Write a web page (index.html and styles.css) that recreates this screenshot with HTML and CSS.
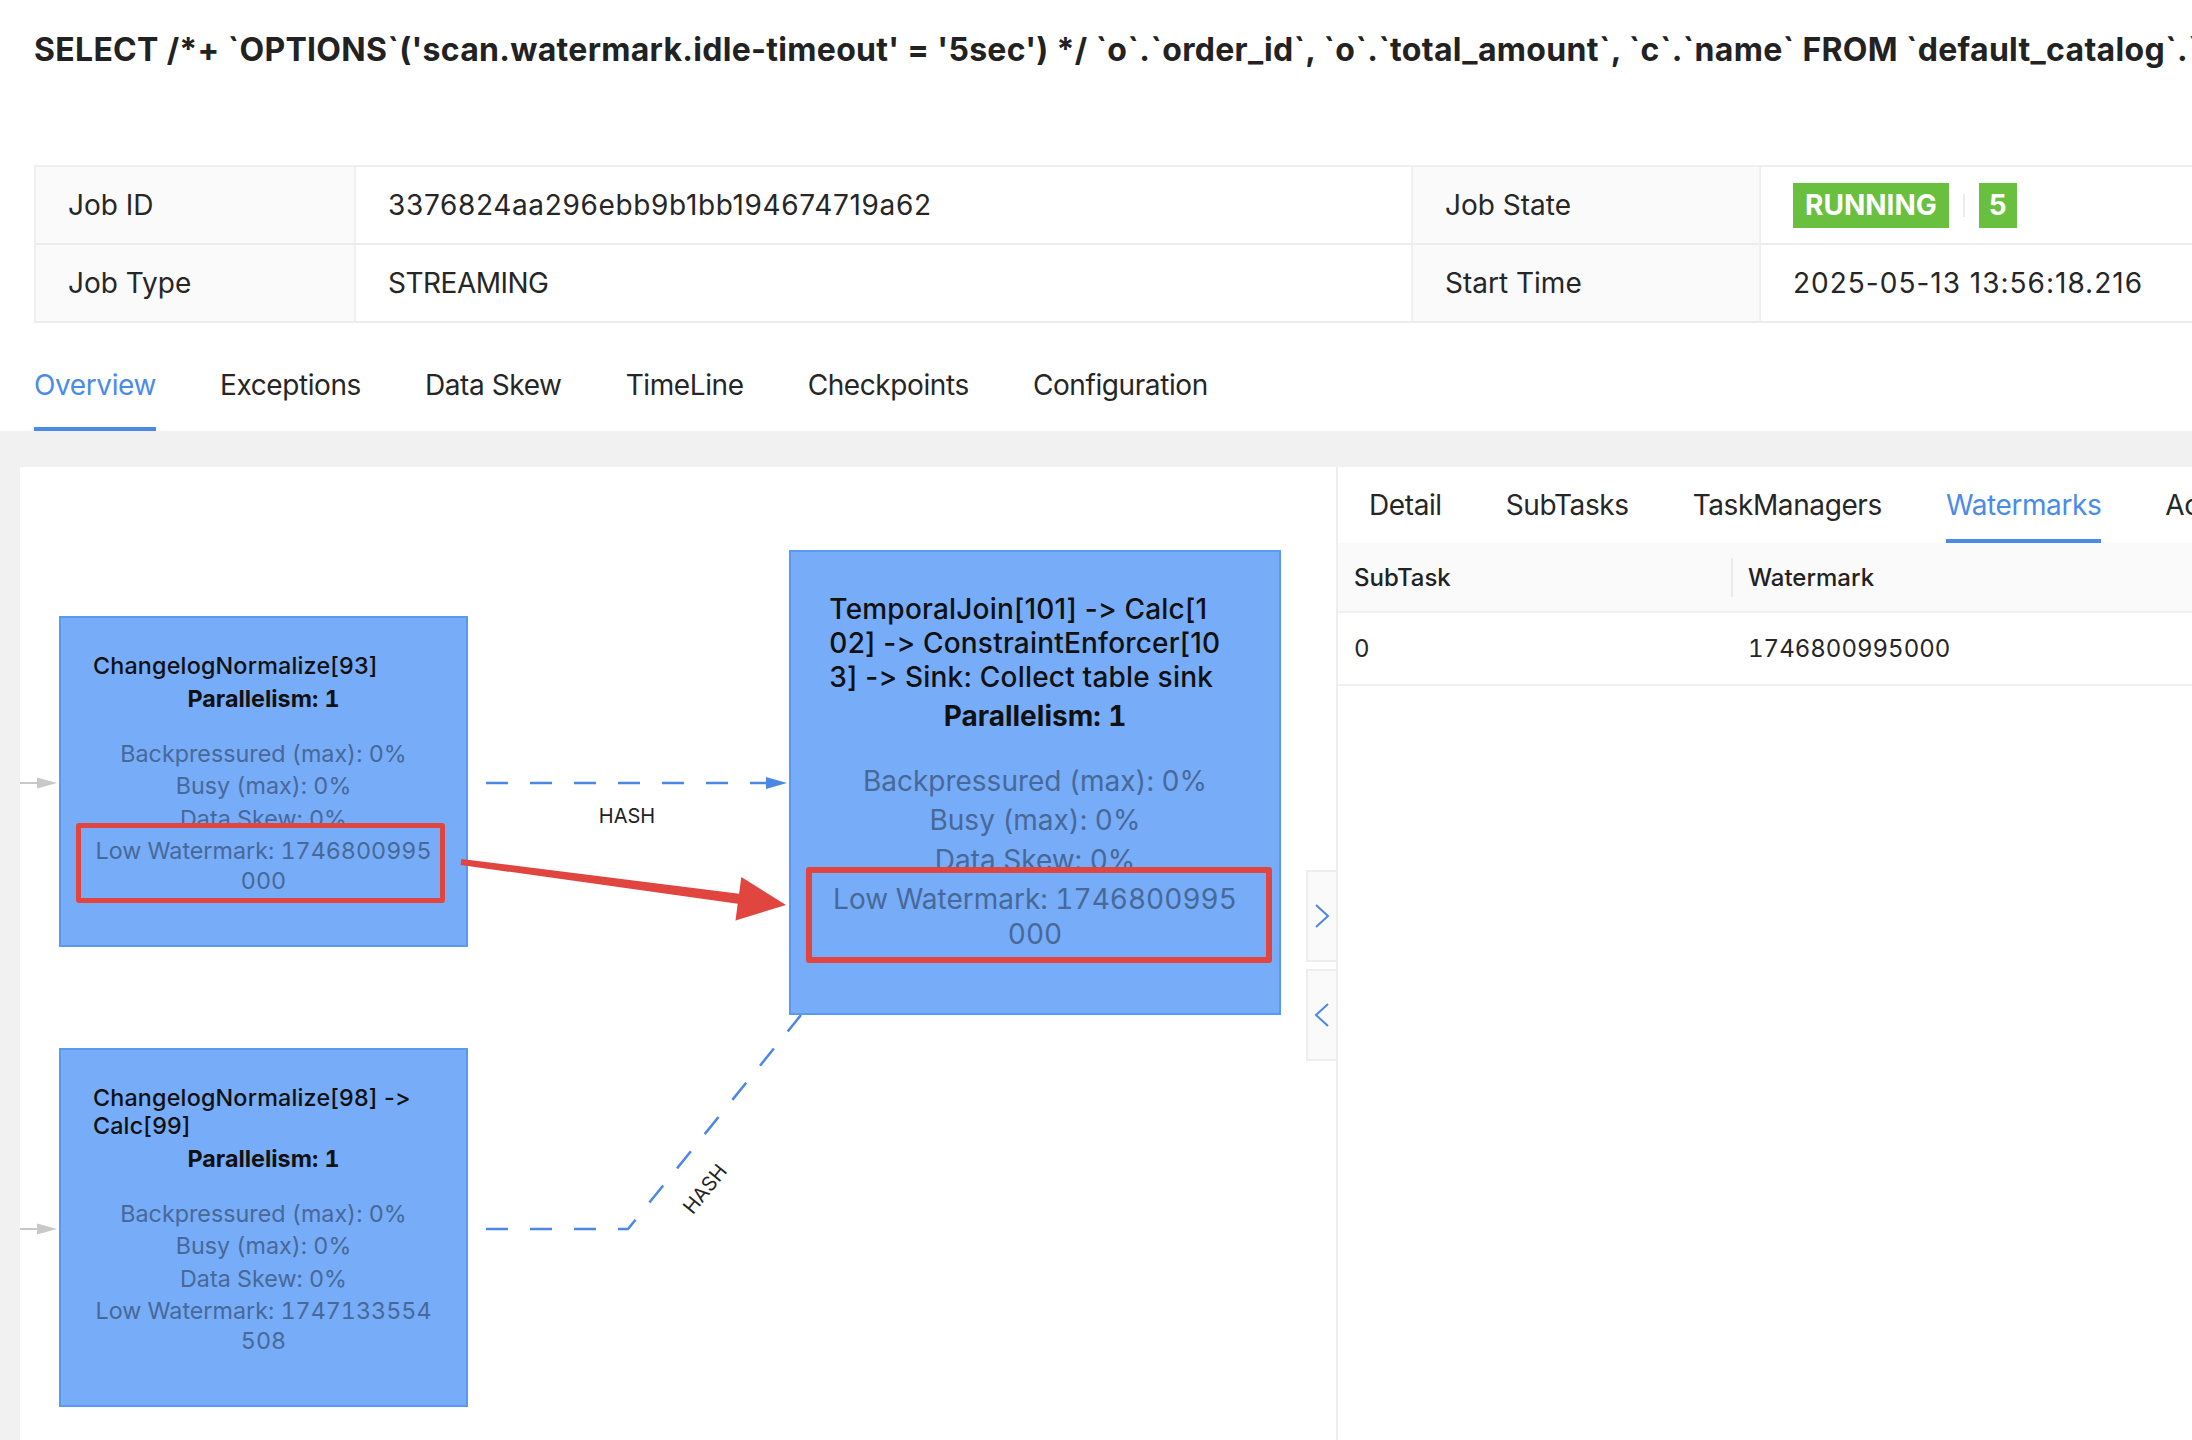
FILE: index.html
```html
<!DOCTYPE html>
<html lang="en">
<head>
<meta charset="utf-8">
<title>Flink Job</title>
<link rel="stylesheet" href="styles.css">
</head>
<body>
<h1 class="sql">SELECT /*+ `OPTIONS`('scan.watermark.idle-timeout' = '5sec') */ `o`.`order_id`, `o`.`total_amount`, `c`.`name` FROM `default_catalog`.`default_database`.`orders` AS `o`</h1>

<div class="desc">
  <div class="desc-label">Job ID</div>
  <div class="desc-value val-id">3376824aa296ebb9b1bb194674719a62</div>
  <div class="desc-label">Job State</div>
  <div class="desc-value"><span class="tag">RUNNING</span><span class="tag-divider"></span><span class="tag tag-num">5</span></div>
  <div class="desc-label">Job Type</div>
  <div class="desc-value val-type">STREAMING</div>
  <div class="desc-label">Start Time</div>
  <div class="desc-value val-date">2025-05-13 13:56:18.216</div>
</div>

<nav class="tabs">
  <div class="tab active">Overview</div>
  <div class="tab">Exceptions</div>
  <div class="tab">Data Skew</div>
  <div class="tab">TimeLine</div>
  <div class="tab">Checkpoints</div>
  <div class="tab">Configuration</div>
</nav>

<main class="main">
  <section class="graph">
    <svg class="edges" width="1316" height="973" viewBox="0 0 1316 973">
      <line x1="0" y1="316" x2="20" y2="316" class="in-line"/>
      <polygon points="17,310.5 37,316 17,321.5" class="in-head"/>
      <line x1="0" y1="762" x2="20" y2="762" class="in-line"/>
      <polygon points="17,756.5 37,762 17,767.5" class="in-head"/>

      <line x1="466" y1="316" x2="748" y2="316" class="dash"/>
      <polygon points="746,310 767,316 746,322" class="dash-head"/>
      <text x="607" y="356" class="edge-label" text-anchor="middle">HASH</text>

      <polyline points="466,762 608,762 781,548" class="dash"/>
      <text transform="translate(685 722) rotate(-51)" y="7" class="edge-label" text-anchor="middle">HASH</text>
    </svg>

    <div class="node node-a">
      <div class="node-title">ChangelogNormalize[93]</div>
      <div class="node-par">Parallelism: 1</div>
      <div class="node-metrics">
        <div class="metric">Backpressured (max): 0%</div>
        <div class="metric">Busy (max): 0%</div>
        <div class="metric">Data Skew: 0%</div>
        <div class="metric">Low Watermark: 1746800995<br>000</div>
      </div>
    </div>

    <div class="node node-b">
      <div class="node-title">ChangelogNormalize[98] -&gt;<br>Calc[99]</div>
      <div class="node-par">Parallelism: 1</div>
      <div class="node-metrics">
        <div class="metric">Backpressured (max): 0%</div>
        <div class="metric">Busy (max): 0%</div>
        <div class="metric">Data Skew: 0%</div>
        <div class="metric">Low Watermark: 1747133554<br>508</div>
      </div>
    </div>

    <div class="node node-c">
      <div class="node-title">TemporalJoin[101] -&gt; Calc[1<br>02] -&gt; ConstraintEnforcer[10<br>3] -&gt; Sink: Collect table sink</div>
      <div class="node-par">Parallelism: 1</div>
      <div class="node-metrics">
        <div class="metric">Backpressured (max): 0%</div>
        <div class="metric">Busy (max): 0%</div>
        <div class="metric">Data Skew: 0%</div>
        <div class="metric">Low Watermark: 1746800995<br>000</div>
      </div>
    </div>

    <div class="mark mark-a"></div>
    <div class="mark mark-c"></div>
    <svg class="red-arrow" width="1316" height="973" viewBox="0 0 1316 973">
      <polygon points="441.4,392 719.1,426.7 721.3,409.9 766,438 715.5,453.5 717.7,436.7 440.6,398"/>
    </svg>

    <div class="collapse-btn btn-expand">
      <svg width="18" height="28" viewBox="0 0 18 28"><polyline points="3,3 15,14 3,25"/></svg>
    </div>
    <div class="collapse-btn btn-collapse">
      <svg width="18" height="28" viewBox="0 0 18 28"><polyline points="15,3 3,14 15,25"/></svg>
    </div>
  </section>

  <aside class="side">
    <div class="side-tabs">
      <div class="side-tab">Detail</div>
      <div class="side-tab">SubTasks</div>
      <div class="side-tab">TaskManagers</div>
      <div class="side-tab active">Watermarks</div>
      <div class="side-tab">Accumulators</div>
    </div>
    <div class="wm-head">
      <div class="wm-c1">SubTask</div>
      <div class="wm-c2">Watermark</div>
    </div>
    <div class="wm-row">
      <div class="wm-c1">0</div>
      <div class="wm-c2">1746800995000</div>
    </div>
  </aside>
</main>
</body>
</html>
```

FILE: styles.css
```css
* { box-sizing: border-box; }
html, body { margin: 0; padding: 0; }
body {
  width: 2192px;
  height: 1440px;
  overflow: hidden;
  font-family: Inter, "Noto Sans", sans-serif;
  font-feature-settings: "calt" 0, "liga" 0;
  font-variant-ligatures: none;
  color: #262626;
  background: #fff;
}

.sql {
  margin: 0;
  padding: 28px 0 0 34px;
  height: 165px;
  font-size: 32px;
  line-height: 44px;
  font-weight: 700;
  letter-spacing: 0.3px;
  white-space: nowrap;
  overflow: hidden;
  color: #222;
}

.desc {
  margin-left: 34px;
  width: 2400px;
  display: grid;
  grid-template-columns: 320px 1057px 348px 675px;
  border-top: 2px solid #efefef;
  font-size: 28px;
}
.desc-label, .desc-value {
  height: 78px;
  line-height: 76px;
  border-left: 2px solid #f0f0f0;
  border-bottom: 2px solid #ececec;
  padding-left: 32px;
  white-space: nowrap;
}
.desc-label { background: #fafafa; color: #262626; }
.desc-value { display: flex; align-items: center; }
.val-id { letter-spacing: 0.65px; }
.val-type { letter-spacing: -0.5px; }
.val-date { letter-spacing: 1px; }

.tag {
  display: inline-block;
  background: #68c03e;
  color: #fff;
  font-weight: 700;
  font-size: 28px;
  height: 45px;
  line-height: 45px;
  padding: 0 12px;
}
.tag-num { padding: 0 10px; }
.tag-divider {
  display: inline-block;
  width: 2px;
  height: 23px;
  background: #ececec;
  margin: 0 14px;
}

.tabs {
  display: flex;
  gap: 64px;
  height: 108px;
  padding: 42px 0 0 34px;
  font-size: 28px;
  letter-spacing: -0.4px;
}
.tab {
  line-height: 40px;
  padding-bottom: 22px;
  height: 66px;
  color: #262626;
}
.tab.active {
  color: #4b8be8;
  border-bottom: 4px solid #4b8be8;
}

.main {
  display: flex;
  height: 1009px;
  padding: 36px 0 0 20px;
  background: #f1f1f1;
}

.graph {
  position: relative;
  flex: none;
  width: 1316px;
  height: 973px;
  background: #fff;
  overflow: hidden;
}
.edges, .red-arrow { position: absolute; left: 0; top: 0; }
.in-line { stroke: #c8c8c8; stroke-width: 2; }
.in-head { fill: #c8c8c8; }
.dash { stroke: #4b88e6; stroke-width: 2.5; stroke-dasharray: 22 22; fill: none; }
.dash-head { fill: #4b88e6; }
.edge-label { font-family: Inter, sans-serif; font-size: 20px; fill: #222; }
.red-arrow polygon { fill: #e0463f; }

.node {
  position: absolute;
  background: #77acf9;
  border: 2px solid #5a99f2;
  font-size: 23.3px;
  padding: 1.48em 1.37em 0;
  color: #111;
  font-variant-numeric: tabular-nums;
}
.node-a { left: 39px; top: 149px; width: 409px; height: 331px; }
.node-b { left: 39px; top: 581px; width: 409px; height: 359px; }
.node-c { left: 769px; top: 83px; width: 492px; height: 465px; font-size: 28px; }

.node-title { font-weight: 500; line-height: 1.2em; white-space: nowrap; letter-spacing: 0.2px; font-variant-numeric: normal; }
.node-par { font-weight: 700; text-align: center; line-height: 1.2em; margin-top: 0.2em; }
.node-metrics { margin: 1.1em -1em 0; color: #486898; text-align: center; }
.metric { line-height: 1.25em; margin-top: 0.15em; white-space: nowrap; }

.mark {
  position: absolute;
  border: 5px solid #e0463f;
  border-radius: 3px;
}
.mark-a { left: 56px; top: 356px; width: 369px; height: 80px; }
.mark-c { left: 786px; top: 400px; width: 466px; height: 96px; border-width: 6px; }

.collapse-btn {
  position: absolute;
  left: 1286px;
  width: 30px;
  height: 92px;
  background: #fafafa;
  border: 2px solid #eeeeee;
  border-right: none;
  display: flex;
  align-items: center;
  justify-content: center;
}
.btn-expand { top: 403px; }
.btn-collapse { top: 502px; }
.collapse-btn polyline { fill: none; stroke: #4b88e6; stroke-width: 2; }

.side {
  flex: 1;
  min-width: 0;
  background: #fff;
  border-left: 2px solid #eeeeee;
  overflow: hidden;
}
.side-tabs {
  display: flex;
  gap: 64px;
  padding: 18px 0 0 31px;
  height: 76px;
  white-space: nowrap;
  font-size: 28px;
  letter-spacing: -0.4px;
}
.side-tab { line-height: 40px; height: 58px; padding-bottom: 14px; color: #262626; }
.side-tab.active { color: #4b8be8; border-bottom: 4px solid #4b8be8; }

.wm-head, .wm-row {
  display: grid;
  grid-template-columns: 393px 1fr;
  align-items: center;
  font-size: 24px;
  border-bottom: 2px solid #f0f0f0;
}
.wm-head { height: 70px; background: #fafafa; font-weight: 500; color: #222; }
.wm-row { height: 73px; color: #262626; font-variant-numeric: tabular-nums; }
.wm-c1 { padding-left: 16px; }
.wm-c2 { padding-left: 17px; }
.wm-head .wm-c2 {
  border-left: 2px solid #eaeaea;
  height: 39px;
  line-height: 39px;
  padding-left: 15px;
}
```
